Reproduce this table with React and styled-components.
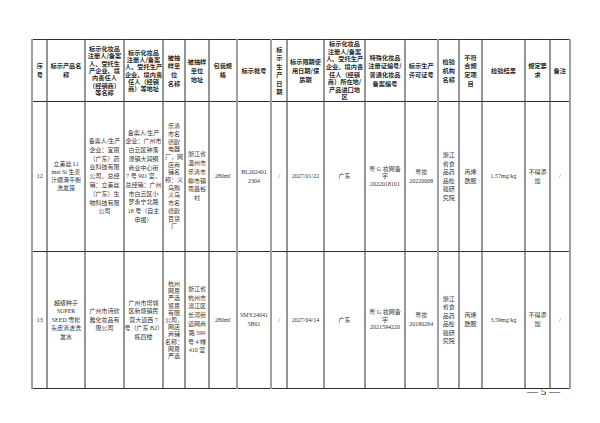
import React from 'react'
import styled, { createGlobalStyle } from 'styled-components'

// the browser clamps very small font sizes, so the table is laid out at 2x and scaled down
const K = 2

const GlobalStyle = createGlobalStyle`
  html, body { margin: 0; padding: 0; background: #fff; }
`

const Sheet = styled.div`
  width: 600px;
  height: 423px;
  box-sizing: border-box;
  padding: 39px 31px 0 31px;
  background: #fff;
  overflow: hidden;
`

const TableFrame = styled.div`
  width: 538px;
  height: 340px;
`

const Table = styled.table`
  width: ${538 * K}px;
  table-layout: fixed;
  border-collapse: collapse;
  transform: scale(${1 / K});
  transform-origin: 0 0;
`

const Col = styled.col`
  width: ${p => p.$w * K}px;
`

const Row = styled.tr`
  height: ${p => p.$h * K}px;
`

const Cell = styled.td`
  padding: 0;
  text-align: center;
  vertical-align: middle;
  border: ${K}px solid #2e2e2e;
  ${p => p.$softL && `border-left: ${2 * K}px solid #a0a0a0;`}
  ${p => p.$softR && `border-right: ${2 * K}px solid #a0a0a0;`}
  color: #333;
  font-family: "Liberation Serif", "Noto Sans CJK SC", serif;
  font-size: ${6 * K}px;
  line-height: ${p => (p.$lh || 8.8) * K}px;
  overflow: hidden;
`

const HeadCell = styled(Cell).attrs({ as: 'th' })`
  font-family: "Noto Sans CJK SC", sans-serif;
  font-weight: 700;
  font-size: ${6.2 * K}px;
  color: #2a2a2a;
`

const Line = styled.span`
  display: block;
  white-space: nowrap;
`

const PageNum = styled.div`
  width: 538px;
  margin-top: 6px;
  padding-right: 9px;
  box-sizing: border-box;
  text-align: right;
  font-family: "Liberation Serif", serif;
  font-size: 11px;
  line-height: 12px;
  color: #222;
`

const widths = [15, 38, 39, 39, 22, 24, 28, 34, 16, 37, 41, 40, 33, 21, 23, 43, 25, 20]
const softLeft = [0, 7, 8, 13]

const tight = (lines, lh) => ({ lines, lh })

const header = [
  ['序', '号'],
  ['标示产品名', '称'],
  tight(['标示化妆品', '注册人/备案', '人、受托生', '产企业、境', '内责任人', '（经销商）', '等名称'], 7.3),
  tight(['标示化妆品', '注册人/备案', '人、受托生产', '企业、境内责', '任人（经销', '商）等地址'], 7.3),
  ['被抽', '样单', '位', '名称'],
  ['被抽样', '单位', '地址'],
  ['包装规', '格'],
  ['标示批号'],
  tight(['标', '示', '生', '产', '日', '期'], 8.5),
  ['标示限期使', '用日期/保', '质期'],
  tight(['标示化妆品', '注册人/备案', '人、受托生产', '企业、境内责', '任人（经销', '商）所在地/', '产品进口地', '区'], 7.6),
  ['特殊化妆品', '注册证编号/', '普通化妆品', '备案编号'],
  ['标示生产', '许可证号'],
  ['检验', '机构', '名称'],
  ['不符', '合规', '定项', '目'],
  ['检验结果'],
  ['规定要', '求'],
  ['备注'],
]

const lab = tight(['浙江', '省食', '品药', '品检', '验研', '究院'], 8.5)

const rows = [
  {
    h: 150,
    cells: [
      ['12'],
      tight(['立美丝 Li', 'mei Si 生姜', '汁顺滑平衡', '洗发露'], 7.8),
      ['备案人/生产', '企业：宜丽', '（广东）药', '业科技有限', '公司，总经', '销：立美丝', '（广东）生', '物科技有限', '公司'],
      tight(['备案人/生产', '企业：广州市', '白云区钟落', '潭镇大润纲', '商业中心街', '7 号 901 室，', '总经销：广州', '市白云区小', '罗永宁北路', '18 号（自主', '申报）'], 8.7),
      tight(['乐清', '市名', '德欧', '电器', '厂，网', '店商', '铺名', '称：义', '乌购', '义乌', '市名', '德欧', '百货', '厂'], 7.7),
      ['浙江省', '温州市', '乐清市', '柳市镇', '南昌谷', '村'],
      ['280ml'],
      ['BL202401', '2304'],
      ['/'],
      ['2027/01/22'],
      ['广东'],
      tight(['粤 G 妆网备', '字', '2022018101'], 7.6),
      ['粤妆', '20220008'],
      lab,
      ['丙烯', '酰胺'],
      ['1.57mg/kg'],
      ['不得添', '加'],
      ['/'],
    ],
  },
  {
    h: 137,
    cells: [
      ['13'],
      tight(['超级种子', 'SUPER', 'SEED 雪松', '头皮清洁洗', '发水'], 8.6),
      tight(['广州市诗欣', '雅化妆品有', '限公司'], 8.7),
      tight(['广州市增城', '区新塘镇民', '营大道西 7', '号（广东 B2）', '栋四楼'], 8.6),
      tight(['杭州', '网易', '严选', '贸易', '有限', '公司，', '网店', '商铺', '名称：', '网易', '严选'], 7.2),
      ['浙江省', '杭州市', '滨江区', '长河街', '道网商', '路 599', '号 4 幢', '410 室'],
      ['280ml'],
      ['SMY24041', '5B01'],
      ['/'],
      ['2027/04/14'],
      ['广东'],
      tight(['粤 G 妆网备', '字', '2021594220'], 7.6),
      ['粤妆', '20180264'],
      lab,
      ['丙烯', '酰胺'],
      ['3.59mg/kg'],
      ['不得添', '加'],
      ['/'],
    ],
  },
]

const linesOf = c => (Array.isArray(c) ? c : c.lines)
const lhOf = c => (Array.isArray(c) ? undefined : c.lh)

function Lines({ items }) {
  return items.map((t, i) => <Line key={i}>{t}</Line>)
}

export default function App() {
  const last = widths.length - 1
  return (
    <>
      <GlobalStyle />
      <Sheet>
        <TableFrame>
          <Table>
            <colgroup>
              {widths.map((w, i) => <Col key={i} $w={w} />)}
            </colgroup>
            <thead>
              <Row $h={52}>
                {header.map((c, i) => (
                  <HeadCell key={i} $lh={lhOf(c)} $softL={softLeft.includes(i)} $softR={i === last}>
                    <Lines items={linesOf(c)} />
                  </HeadCell>
                ))}
              </Row>
            </thead>
            <tbody>
              {rows.map((r, ri) => (
                <Row key={ri} $h={r.h}>
                  {r.cells.map((c, i) => (
                    <Cell key={i} $lh={lhOf(c)} $softL={softLeft.includes(i)} $softR={i === last}>
                      <Lines items={linesOf(c)} />
                    </Cell>
                  ))}
                </Row>
              ))}
            </tbody>
          </Table>
        </TableFrame>
        <PageNum>— 5 —</PageNum>
      </Sheet>
    </>
  )
}
